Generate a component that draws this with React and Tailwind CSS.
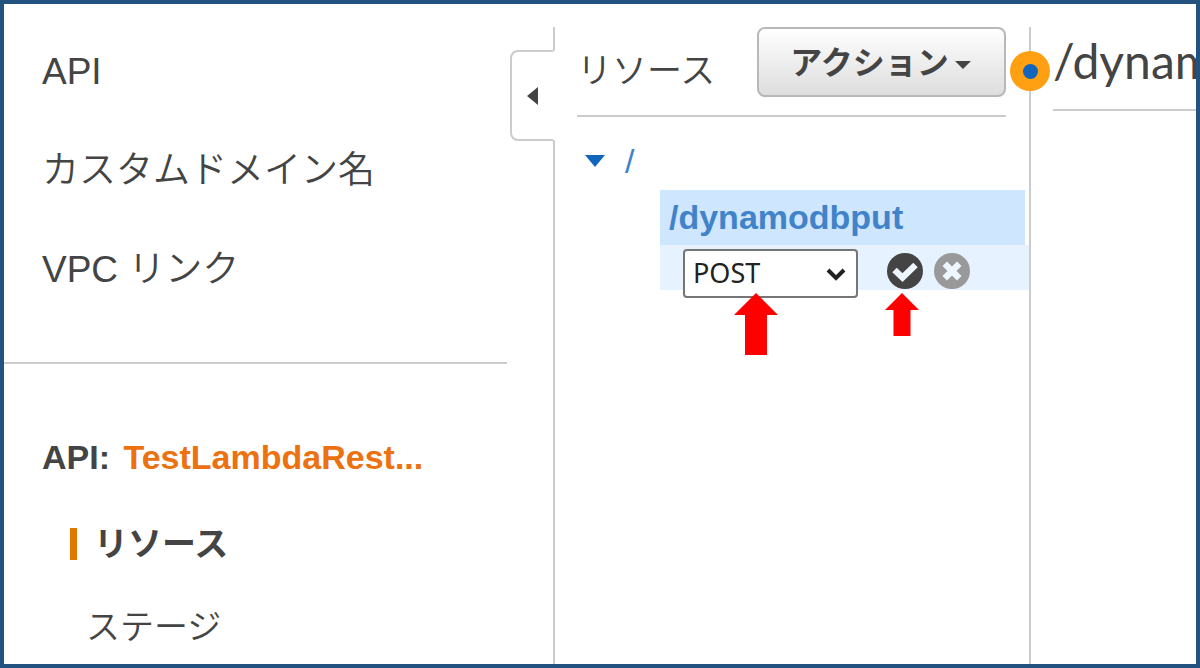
import React, { useState } from 'react'

const topLinks = ['API', 'カスタムドメイン名', 'VPC リンク']
const methods = ['POST', 'GET', 'PUT', 'DELETE', 'PATCH', 'HEAD', 'OPTIONS', 'ANY']

const CheckCircle = () => (
  <svg viewBox="0 0 36 36" className="h-9 w-9" aria-hidden="true">
    <circle cx="18" cy="18" r="18" fill="#444444" />
    <path d="M7.5 17 L15.5 24.5 L28.5 12" fill="none" stroke="#eef6ff" strokeWidth="6.4" />
  </svg>
)

const CloseCircle = () => (
  <svg viewBox="0 0 36 36" className="h-9 w-9" aria-hidden="true">
    <circle cx="18" cy="18" r="18" fill="#999999" />
    <path d="M13 13 L23 23 M23 13 L13 23" stroke="#eef6ff" strokeWidth="6.4" strokeLinecap="square" />
  </svg>
)

const Sidebar = () => (
  <div className="flex w-[551px] shrink-0">
    <nav className="min-w-0 flex-1 pt-[21px]">
      <ul className="flex flex-col gap-[51px] pl-[38px] text-[37px]/12 font-[350]">
        {topLinks.map((label) => (
          <li key={label}>
            <a href="#">{label}</a>
          </li>
        ))}
      </ul>
      <hr className="mt-[68px] mr-px border-t-2 border-[#cccccc]" />
      <div className="pt-[69px] pl-[38px] text-[34px]/12">
        <p className="font-bold">
          API: <a href="#" className="ml-1 text-[#ec7211]">TestLambdaRest...</a>
        </p>
        <ul className="mt-[39px] flex flex-col gap-[35px] pl-7">
          <li className="flex items-center">
            <span className="h-8 w-[7px] bg-[#e07700]" />
            <a href="#" className="pl-[17px] font-bold">リソース</a>
          </li>
          <li className="pl-4 font-[350]">
            <a href="#">ステージ</a>
          </li>
        </ul>
      </div>
    </nav>

    {/* Collapse tab */}
    <div className="flex w-[47px] flex-col">
      <div className="h-6 border-r-2 border-[#cccccc]" />
      <button aria-label="Collapse" className="-my-px mr-0.5 ml-[2px] flex h-[91px] items-center rounded-l-lg border-2 border-r-0 border-[#cccccc] pl-[15px]">
        <svg viewBox="0 0 11 18" className="h-[18px] w-[11px]" aria-hidden="true">
          <path d="M0 9 L11 0 V18 Z" fill="#444444" />
        </svg>
      </button>
      <div className="flex-1 border-r-2 border-[#cccccc]" />
    </div>
  </div>
)

const ResourceTree = () => {
  const [method, setMethod] = useState('POST')

  return (
    <section className="relative w-[476px] shrink-0 border-r-2 border-[#cccccc]">
      <div className="mr-[23px] ml-[22px] flex h-[90px] items-start justify-between border-b-2 border-[#cccccc]">
        <h2 className="pt-5 text-[35px]/12 font-[350]">リソース</h2>
        <button className="flex h-[70px] w-[249px] items-center justify-center gap-1.5 rounded-lg border-2 border-[#b8b8b8] bg-linear-to-b from-white to-[#dddddd] pt-0.5 pr-0.5 text-[32px] font-bold">
          アクション
          <svg viewBox="0 0 16 8" className="mt-1 h-2 w-4" aria-hidden="true">
            <path d="M0 0 H16 L8 8 Z" fill="#444444" />
          </svg>
        </button>
      </div>

      <div className="mt-5 flex h-12 items-center gap-5 pl-[30px]">
        <svg viewBox="0 0 20 12" className="h-3 w-5" aria-hidden="true">
          <path d="M0 0 H20 L10 12 Z" fill="#1166bb" />
        </svg>
        <a href="#" className="text-[34px] text-[#4183c9]">/</a>
      </div>

      <div className="mt-[5px] ml-[105px]">
        <a href="#" className="mr-1 block h-[55px] bg-[#cfe6ff] pl-[9px] text-[34px]/[54px] font-bold text-[#4183c9]">
          /dynamodbput
        </a>
        <div className="flex h-[45px] items-start bg-[#e6f2ff] pl-[23px]">
          <div className="relative mt-1">
            <select
              aria-label="Method"
              value={method}
              onChange={(e) => setMethod(e.target.value)}
              className="h-[49px] w-[175px] appearance-none rounded-sm border-2 border-[#767676] bg-white pl-2 font-['Noto_Sans',sans-serif] text-[27px] text-[#222222]"
            >
              {methods.map((m) => (
                <option key={m}>{m}</option>
              ))}
            </select>
            <svg viewBox="0 0 20 13" className="pointer-events-none absolute top-[19px] right-3 h-[13px] w-5" aria-hidden="true">
              <path d="M2 2 L10 10 L18 2" fill="none" stroke="#222222" strokeWidth="4" />
            </svg>
            <svg viewBox="0 0 44 62" className="pointer-events-none absolute top-11 left-[51px] h-[62px] w-11" aria-hidden="true">
              <path d="M22 0 L44 22 H33 V62 H11 V22 H0 Z" fill="#ff0000" />
            </svg>
          </div>
          <button aria-label="Save" className="relative mt-2 ml-[29px]">
            <CheckCircle />
            <svg viewBox="0 0 34 43" className="pointer-events-none absolute top-10 -left-0.5 h-[43px] w-[34px]" aria-hidden="true">
              <path d="M17 0 L34 17 H25.5 V43 H8.5 V17 H0 Z" fill="#ff0000" />
            </svg>
          </button>
          <button aria-label="Cancel" className="mt-2 ml-[11px]">
            <CloseCircle />
          </button>
        </div>
      </div>

      {/* Resize handle over the divider */}
      <span className="absolute top-6 -right-[21px] z-10 flex h-10 w-10 items-center justify-center rounded-full bg-[#ff9f12]">
        <span className="h-[15px] w-[15px] rounded-full bg-[#1166bb]" />
      </span>
    </section>
  )
}

const App = () => (
  <div className="flex min-h-screen overflow-hidden border-4 border-[#215280] bg-white pt-[23px] font-['Liberation_Sans','Noto_Sans_CJK_JP',sans-serif] text-[#444444]">
    <Sidebar />
    <ResourceTree />
    <main className="min-w-0 flex-1 pl-[22px]">
      <h1 className="h-[84px] border-b-2 border-[#cccccc] font-['Lato',sans-serif] text-5xl/[68px] whitespace-nowrap">/dynamodbput</h1>
    </main>
  </div>
)

export default App
